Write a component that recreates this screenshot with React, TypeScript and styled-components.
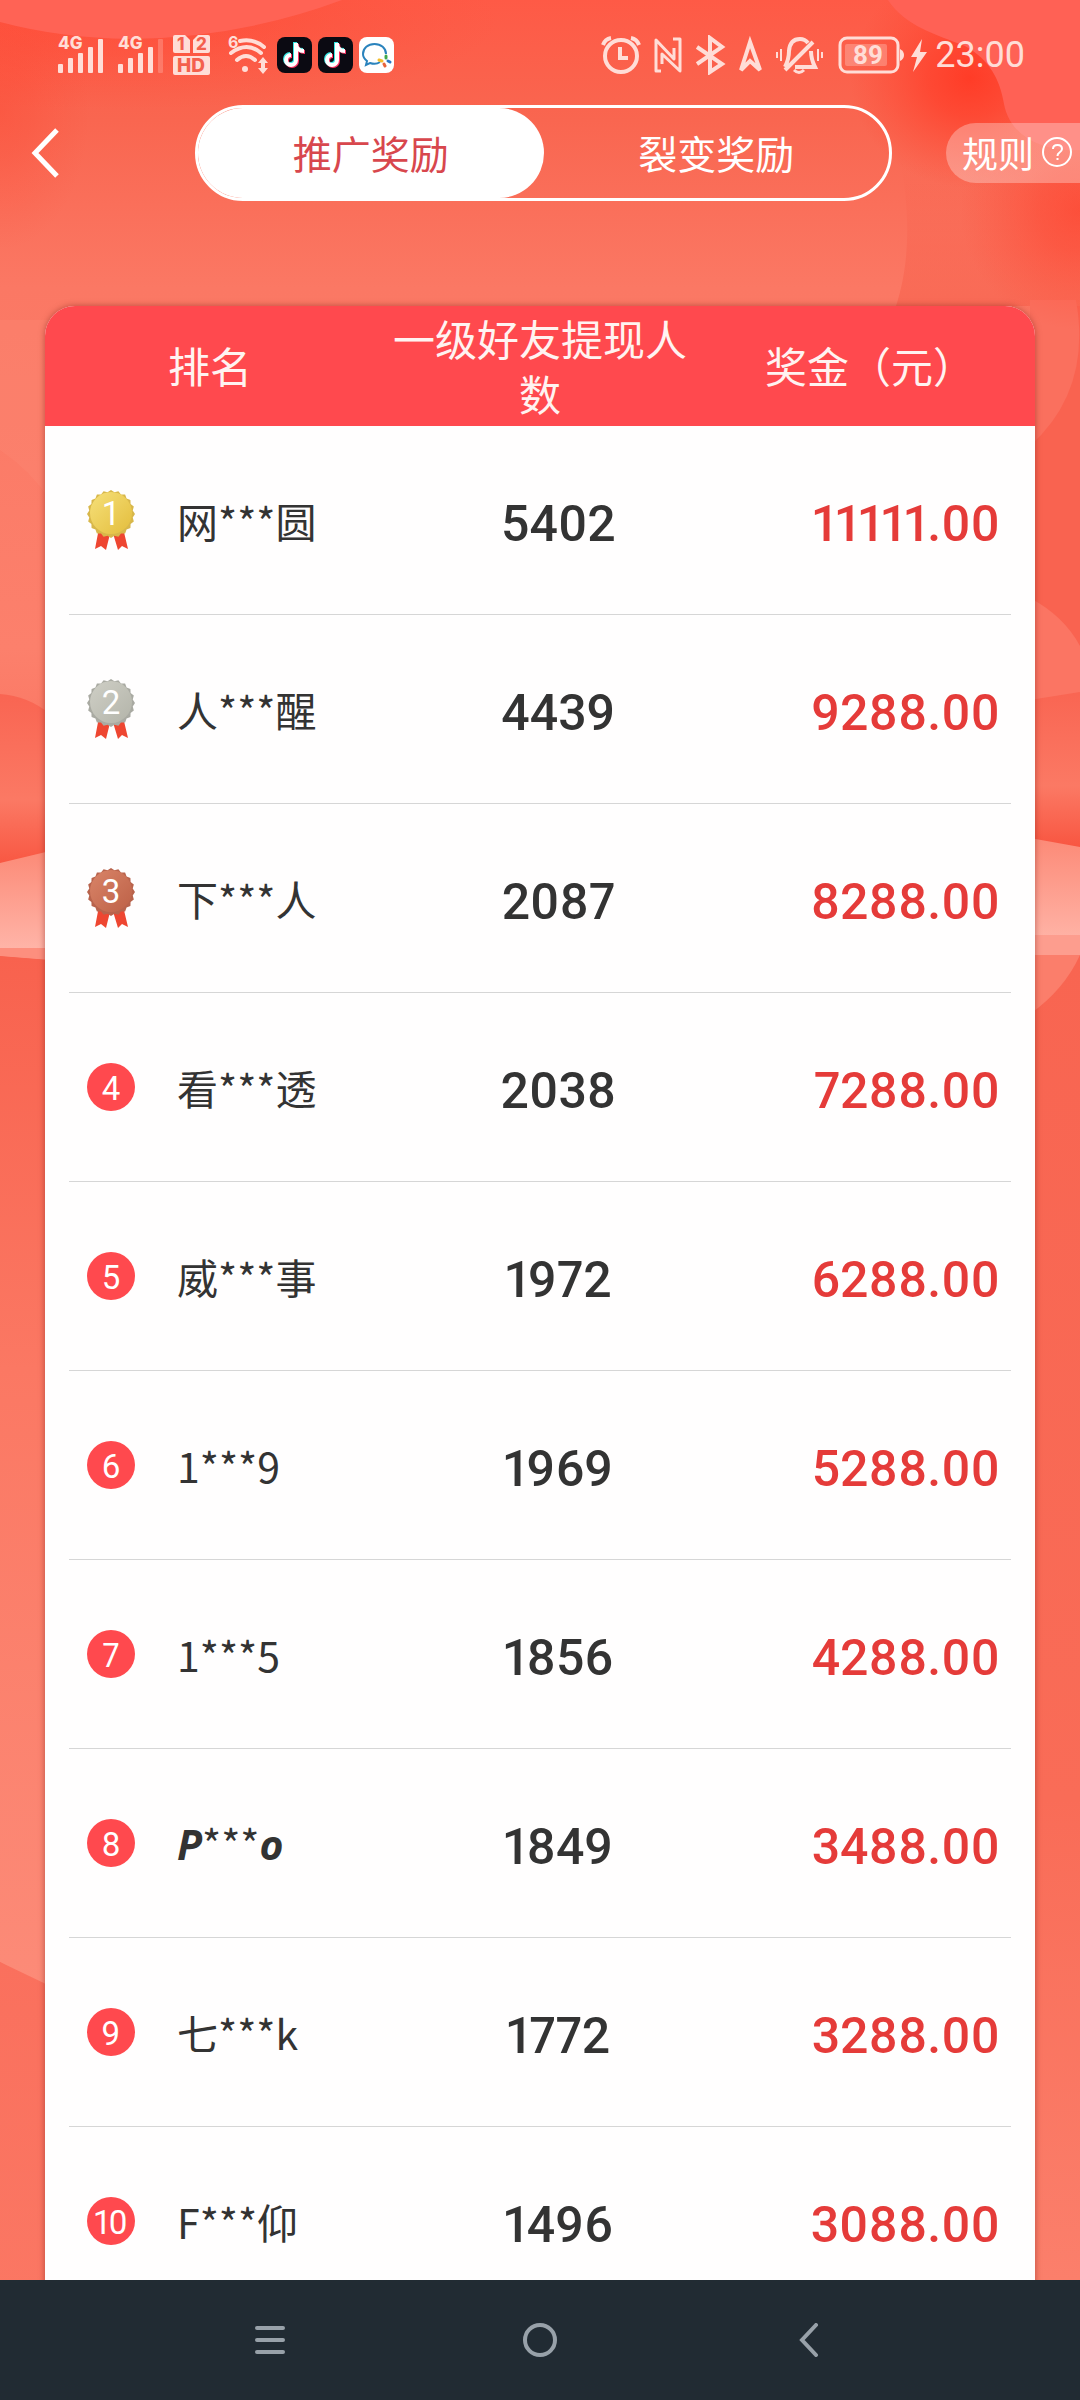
import React, { useState } from 'react';
import styled, { createGlobalStyle, css } from 'styled-components';

const cjk = '"Noto Sans CJK SC", "Noto Sans", sans-serif';
const latin = 'Roboto, "Noto Sans", "Noto Sans CJK SC", sans-serif';

const GlobalStyle = createGlobalStyle`
  *, *::before, *::after { box-sizing: border-box; }
  body { margin: 0; font-family: ${cjk}; color: #333; }
  button { margin: 0; padding: 0; border: 0; background: none; font: inherit; color: inherit; cursor: pointer; }
`;

/* ---------- page ---------- */

const Screen = styled.div`
  position: relative;
  isolation: isolate;
  display: flex;
  flex-direction: column;
  height: 100vh;
  overflow: hidden;
`;

const Backdrop = styled.svg`
  position: absolute;
  inset: 0;
  z-index: -1;
  width: 100%;
  height: 100%;
`;

/* ---------- status bar ---------- */

const StatusBar = styled.header`
  display: flex;
  align-items: center;
  justify-content: space-between;
  height: 105px;
  padding: 4px 55px 0 57px;
  color: #ffddd7;
`;

const StatusGroup = styled.div<{ $gap: number }>`
  display: flex;
  align-items: center;
  gap: ${(p) => p.$gap}px;

  svg { display: block; }
`;

const Clock = styled.time`
  margin-left: -4px;
  font-family: Roboto, sans-serif;
  font-size: 36px;
  line-height: 40px;
`;

/* ---------- toolbar ---------- */

const Toolbar = styled.nav`
  display: flex;
  align-items: center;
  height: 96px;
  color: #fff;
`;

const ToolbarSide = styled.div<{ $end?: boolean }>`
  flex: 0 0 ${(p) => (p.$end ? 188 : 195)}px;
  display: flex;
  justify-content: ${(p) => (p.$end ? 'flex-end' : 'flex-start')};
`;

const BackButton = styled.button`
  display: flex;
  padding: 0 30px;
`;

const Tabs = styled.div`
  flex: 1;
  display: flex;
  height: 96px;
  border: 3px solid #fff;
  border-radius: 48px;
`;

const Tab = styled.button<{ $active: boolean }>`
  flex: 1;
  padding-bottom: 3px;
  border-radius: 48px;
  font-size: 39px;
  line-height: 54px;
  ${(p) => p.$active && css`
    background: #fff;
    color: #d8474d;
  `}
`;

const RulesButton = styled.button`
  display: flex;
  align-items: center;
  gap: 8px;
  height: 60px;
  padding: 0 7px 2px 16px;
  border-radius: 30px 0 0 30px;
  background: rgba(255, 255, 255, 0.3);
  font-size: 36px;
  line-height: 54px;
`;

/* ---------- ranking ---------- */

const Content = styled.main`
  flex: 1;
  min-height: 0;
  overflow: hidden;
  padding: 105px 45px 0;
`;

const Ranking = styled.table`
  display: block;
  overflow: hidden;
  border-radius: 30px 30px 0 0;
  background: #fffefe;
  box-shadow: 0 0 6px rgba(120, 30, 20, 0.5);
`;

const RankingHead = styled.thead`
  display: block;
  background: #ff494e;
  color: #fff3f1;
`;

const HeadRow = styled.tr`
  display: grid;
  grid-template-columns: repeat(3, 1fr);
  align-items: center;
  height: 120px;
  padding-bottom: 3px;
`;

const HeadCell = styled.th`
  padding: 0;
  font-size: 42px;
  font-weight: 400;
  line-height: 55px;
  text-align: center;
`;

const RankingBody = styled.tbody`
  display: block;
  padding: 0 24px;
`;

const Row = styled.tr`
  display: grid;
  grid-template-columns: 90px 14fr 10fr 17fr;
  align-items: center;
  height: 189px;
  padding: 0 11px 0 18px;
  border-bottom: 1px solid #d6d6d6;
`;

const Cell = styled.td`
  display: flex;
  padding: 0;
`;

const NameCell = styled(Cell)`
  display: block;
  font-size: 41px;
  line-height: 60px;
  white-space: nowrap;
`;

const Slanted = styled.em`
  font-family: "Noto Sans", sans-serif;
  font-weight: 700;
  font-style: italic;
`;

const figures = css`
  display: block;
  padding-top: 8px;
  font-family: ${latin};
  font-feature-settings: 'pnum' 1;
  font-size: 50px;
  font-weight: 500;
  line-height: 60px;
`;

const CountCell = styled(Cell)`
  ${figures}
  text-align: center;
`;

const PrizeCell = styled(Cell)`
  ${figures}
  color: #e53b39;
  text-align: right;
`;

const RankDot = styled.span`
  display: grid;
  place-items: center;
  width: 48px;
  height: 48px;
  padding-top: 3px;
  border-radius: 50%;
  background: #ff494e;
  color: #fff;
  font-family: ${latin};
  font-size: 33px;
  line-height: 45px;
  font-feature-settings: 'pnum' 1;
`;

/* ---------- system navigation ---------- */

const SystemNav = styled.footer`
  flex: 0 0 120px;
  display: flex;
  justify-content: center;
  background: #212b33;
  color: #98a1a9;
`;

const SystemButton = styled.button`
  flex: 0 0 25%;
  display: grid;
  place-items: center;
`;

/* ---------- drawings ---------- */

function Background() {
  return (
    <Backdrop viewBox="0 0 1080 2400" preserveAspectRatio="none" aria-hidden="true">
      <defs>
        <linearGradient id="base" x1="0" y1="0" x2="0" y2="1">
          <stop offset="0" stopColor="#fe5a46" />
          <stop offset=".05" stopColor="#f96650" />
          <stop offset=".12" stopColor="#fb7864" />
          <stop offset=".27" stopColor="#fc806c" />
          <stop offset=".4" stopColor="#f86551" />
          <stop offset=".75" stopColor="#f96c57" />
          <stop offset=".95" stopColor="#fb7f6b" />
        </linearGradient>
        <linearGradient id="light" x1="0" y1="0" x2="0" y2="1">
          <stop offset="0" stopColor="#fc8a77" />
          <stop offset="1" stopColor="#ffb9ad" />
        </linearGradient>
        <linearGradient id="fold" x1="0" y1="0" x2="0" y2="1">
          <stop offset="0" stopColor="#f96552" />
          <stop offset=".6" stopColor="#fb7964" />
          <stop offset="1" stopColor="#f8543f" />
        </linearGradient>
        <linearGradient id="leftLow" x1="0" y1="0" x2="0" y2="1">
          <stop offset="0" stopColor="#f8624e" />
          <stop offset=".4" stopColor="#fb7863" />
          <stop offset="1" stopColor="#fc8b78" />
        </linearGradient>
        <linearGradient id="leftEnd" x1="0" y1="0" x2="0" y2="1">
          <stop offset="0" stopColor="#fa705d" />
          <stop offset="1" stopColor="#fb7965" />
        </linearGradient>
        <linearGradient id="shade" x1="0" y1="0" x2="0" y2="1">
          <stop offset="0" stopColor="#f8644f" stopOpacity="0" />
          <stop offset=".6" stopColor="#f8644f" stopOpacity=".5" />
          <stop offset="1" stopColor="#f8644f" stopOpacity=".7" />
        </linearGradient>
        <radialGradient id="glow">
          <stop offset="0" stopColor="#ff3c27" />
          <stop offset=".35" stopColor="#ff402b" stopOpacity=".75" />
          <stop offset="1" stopColor="#ff4a34" stopOpacity="0" />
        </radialGradient>
      </defs>
      <rect width="1080" height="2400" fill="url(#base)" />
      <ellipse cx="120" cy="20" rx="380" ry="90" fill="url(#glow)" opacity=".4" />
      <ellipse cx="0" cy="110" rx="90" ry="140" fill="url(#glow)" opacity=".3" />
      <path d="M0 0H342Q240 38 130 39Q60 38 0 22Z" fill="#ff6355" />
      <path d="M896 306C908 270 912 220 900 160L1080 160V306Z" fill="url(#shade)" />
      <path d="M1030 306H1080V700H1030Z" fill="#f96350" />
      <path d="M1030 300H1076Q1092 390 1030 446Z" fill="#fa705e" />
      <ellipse cx="1080" cy="210" rx="120" ry="120" fill="url(#glow)" opacity=".6" />
      <ellipse cx="970" cy="78" rx="120" ry="110" fill="url(#glow)" />
      <path d="M888 0C905 26 935 34 965 46C990 60 1000 80 1004 104C1010 135 1040 152 1080 150V0Z" fill="#ff6155" />
      <rect x="1030" y="690" width="50" height="160" fill="url(#fold)" />
      <path d="M1030 598Q1064 616 1080 646V692L1030 700Z" fill="#fb7563" />
      <path d="M0 694Q28 696 50 714V870H0Z" fill="url(#fold)" />
      <path d="M0 450Q30 470 50 500V320H0Z" fill="#fd8772" opacity=".4" />
      <path d="M0 863L50 851V960L0 956Z" fill="url(#light)" />
      <path d="M0 948H50V960L0 956Z" fill="#fd8f7e" />
      <path d="M1030 838L1080 847V955H1030Z" fill="url(#light)" />
      <path d="M1030 935H1080V955H1030Z" fill="#fd9d8e" />
      <path d="M0 956L50 960V1990L0 1962Z" fill="url(#leftLow)" />
      <path d="M0 1962L50 1986V2400H0Z" fill="url(#leftEnd)" />
      <path d="M1030 955H1080Q1064 990 1030 1014Z" fill="#fb7e6b" />
    </Backdrop>
  );
}

function Signal({ width, bars }: { width: number; bars: number }) {
  return (
    <svg width={width} height="48" viewBox={`0 -4 ${width} 48`} fill="currentColor" role="img" aria-label="4G">
      <text x="1" y="14" fontFamily="Inter, sans-serif" fontWeight="800" fontSize="17">4G</text>
      {[9, 15, 20, 26, 34].map((h, i) => (
        <rect key={h} x={1 + i * 10} y={38 - h} width="5" height={h} rx="1" opacity={i < bars ? 1 : 0.25} />
      ))}
    </svg>
  );
}

function DualSim() {
  return (
    <svg width="48" height="42" viewBox="0 0 48 42" role="img" aria-label="HD">
      <g fill="currentColor">
        <path d="M2 1h10l5 5v13H2q-2 0-2-2V3q0-2 2-2Z" />
        <path d="M25 1h10q2 0 2 2v14q0 2-2 2H20V6Z" />
        <rect y="22" width="37" height="19" rx="2" />
      </g>
      <g fill="#f4604d" fontFamily="Inter, sans-serif" fontWeight="800" fontSize="17">
        <text x="4" y="16">1</text>
        <text x="23" y="16">2</text>
      </g>
      <text x="4" y="38" fill="#f4604d" fontFamily="Inter, sans-serif" fontWeight="800" fontSize="19">HD</text>
    </svg>
  );
}

function Wifi() {
  return (
    <svg width="44" height="48" viewBox="0 -4 44 48" fill="none" stroke="currentColor" strokeWidth="4" role="img" aria-label="Wi-Fi 6">
      <text x="1" y="13" fill="currentColor" stroke="none" fontFamily="Inter, sans-serif" fontWeight="700" fontSize="16">6</text>
      <path d="M13 6Q26 3 37 12M4 18Q20 6 34 18M10 25Q19 17 28 25" strokeLinecap="round" />
      <circle cx="18" cy="34" r="3" fill="currentColor" stroke="none" />
      <path d="M36 22l5 6h-3v5h3l-5 6-5-6h3v-5h-3Z" fill="currentColor" stroke="none" />
    </svg>
  );
}

function NoteApp() {
  const note = 'M19 6v17a5 5 0 1 1-5-5M19 6c0 6 4 8 8 8';
  return (
    <svg width="35" height="36" viewBox="0 0 35 36" fill="none" strokeWidth="4" role="img" aria-label="TikTok">
      <rect width="35" height="36" rx="8" fill="#0b0a12" />
      <path d={note} stroke="#35e6e3" transform="translate(-1 -1)" />
      <path d={note} stroke="#fa3564" transform="translate(1 1)" />
      <path d={note} stroke="#fff" />
    </svg>
  );
}

function ChatApp() {
  return (
    <svg width="35" height="36" viewBox="0 0 35 36" fill="none" strokeWidth="2" role="img" aria-label="WeCom">
      <rect width="35" height="36" rx="8" fill="#fff" />
      <path d="M27 17C27 11 22 7 15.500 7S4 11 4 17q0 4 4 7l-1 4 4-2q6 2 10-1" stroke="#2a83bd" />
      <g strokeWidth="3" strokeLinecap="round">
        <path d="M27 19v2" stroke="#3fa84c" />
        <path d="M29 24l2 1" stroke="#2a76c4" />
        <path d="M25 27l1 2" stroke="#e8633a" />
        <path d="M20 23l3 1" stroke="#f3bd2c" />
      </g>
    </svg>
  );
}

function Alarm() {
  return (
    <svg width="40" height="40" viewBox="0 0 40 40" fill="none" stroke="currentColor" strokeWidth="4" role="img" aria-label="Alarm">
      <circle cx="20" cy="21" r="16" />
      <path d="M19 12v11h8" />
      <path d="M2 10Q4 4 10 3M38 10Q36 4 30 3" />
    </svg>
  );
}

function Nfc() {
  return (
    <svg width="30" height="40" viewBox="0 0 30 40" fill="none" stroke="currentColor" strokeWidth="3" strokeLinejoin="round" role="img" aria-label="NFC">
      <path d="M8 36H3V5L21 24V13M20 4h7V36L9 19V29" />
    </svg>
  );
}

function Bluetooth() {
  return (
    <svg width="31" height="40" viewBox="0 0 31 40" fill="none" stroke="currentColor" strokeWidth="4" role="img" aria-label="Bluetooth">
      <path d="M2 12L27 29 15 37V3L27 12 2 29" />
    </svg>
  );
}

function Pointer() {
  return (
    <svg width="25" height="40" viewBox="0 0 25 40" fill="none" stroke="currentColor" strokeWidth="4" role="img" aria-label="Location">
      <path d="M12 7L3 35 12 26 22 35Z" />
    </svg>
  );
}

function Muted() {
  return (
    <svg width="49" height="40" viewBox="0 0 49 40" fill="none" stroke="currentColor" strokeWidth="4" role="img" aria-label="Vibrate">
      <path d="M10 35L38 7M10 32Q14 24 14 16Q15 4 25 4Q30 4 33 8M36 16Q36 24 40 32H20" />
      <path d="M19 35Q24 40 29 35" strokeWidth="3" />
      <path d="M6 14v12M2 17v6M43 14v12M47 17v6" strokeWidth="2" />
    </svg>
  );
}

function Battery() {
  return (
    <svg width="91" height="40" viewBox="0 0 91 40" role="img" aria-label="89%">
      <rect x="4" y="3" width="58" height="34" rx="7" fill="none" stroke="currentColor" strokeWidth="3" />
      <rect x="9" y="9" width="42" height="22" rx="2" fill="currentColor" opacity=".3" />
      <path d="M64 14q4 2 4 6t-4 6Z" fill="currentColor" />
      <text x="32" y="29" textAnchor="middle" fill="currentColor" fontFamily="Roboto, sans-serif" fontWeight="700" fontSize="26">89</text>
      <path d="M86 4L75 22h6l-4 15 14-20h-7Z" fill="currentColor" />
    </svg>
  );
}

const medalTones: Record<number, [string, string, string]> = {
  1: ['#e3bd3c', '#f6e07a', '#d8b74a'],
  2: ['#b3b4a9', '#cfcfc6', '#a9aaa2'],
  3: ['#bd6147', '#d98468', '#b8634c'],
};

const scallops = Array.from({ length: 40 }, (_, i) => {
  const angle = (i * Math.PI) / 20;
  const radius = i % 2 ? 22 : 24;
  return `${24 + radius * Math.sin(angle)},${24 - radius * Math.cos(angle)}`;
}).join(' ');

function Medal({ rank }: { rank: number }) {
  const [dark, bright, rim] = medalTones[rank];
  return (
    <svg width="48" height="60" viewBox="0 0 48 60">
      <defs>
        <linearGradient id={`medal${rank}`} x1="0" y1="0" x2="1" y2="1">
          <stop offset="0" stopColor={bright} />
          <stop offset="1" stopColor={dark} />
        </linearGradient>
      </defs>
      <path d="M12 38L8 59l6-3 5 4 5-20Z" fill="#ee4631" />
      <path d="M36 38l5 21-6-3-4 4-6-20Z" fill="#ee4631" />
      <polygon points={scallops} fill={rim} />
      <circle cx="24" cy="23" r="21" fill={`url(#medal${rank})`} />
      <text x="24" y="35" textAnchor="middle" fill="#fff" fontFamily="Roboto, sans-serif" fontSize="33">{rank}</text>
    </svg>
  );
}

/* ---------- data ---------- */

interface Entry {
  rank: number;
  name: React.ReactNode;
  count: number;
  prize: string;
}

const entries: Entry[] = [
  { rank: 1, name: '网***圆', count: 5402, prize: '11111.00' },
  { rank: 2, name: '人***醒', count: 4439, prize: '9288.00' },
  { rank: 3, name: '下***人', count: 2087, prize: '8288.00' },
  { rank: 4, name: '看***透', count: 2038, prize: '7288.00' },
  { rank: 5, name: '威***事', count: 1972, prize: '6288.00' },
  { rank: 6, name: '1***9', count: 1969, prize: '5288.00' },
  { rank: 7, name: '1***5', count: 1856, prize: '4288.00' },
  { rank: 8, name: <><Slanted>P</Slanted>***<Slanted>o</Slanted></>, count: 1849, prize: '3488.00' },
  { rank: 9, name: '七***k', count: 1772, prize: '3288.00' },
  { rank: 10, name: 'F***仰', count: 1496, prize: '3088.00' },
];

const tabs = ['推广奖励', '裂变奖励'];

export default function App() {
  const [active, setActive] = useState(0);

  return (
    <Screen lang="zh-CN">
      <GlobalStyle />
      <Background />

      <StatusBar>
        <StatusGroup $gap={6}>
          <Signal width={54} bars={5} />
          <Signal width={50} bars={4} />
          <DualSim />
          <Wifi />
          <NoteApp />
          <NoteApp />
          <ChatApp />
        </StatusGroup>
        <StatusGroup $gap={12}>
          <Alarm />
          <Nfc />
          <Bluetooth />
          <Pointer />
          <Muted />
          <Battery />
          <Clock>23:00</Clock>
        </StatusGroup>
      </StatusBar>

      <Toolbar>
        <ToolbarSide>
          <BackButton aria-label="返回">
            <svg width="30" height="50" viewBox="0 0 30 50" fill="none" stroke="currentColor" strokeWidth="5">
              <path d="M27 2L5 25 27 48" />
            </svg>
          </BackButton>
        </ToolbarSide>
        <Tabs role="tablist">
          {tabs.map((label, i) => (
            <Tab key={label} role="tab" aria-selected={active === i} $active={active === i} onClick={() => setActive(i)}>
              {label}
            </Tab>
          ))}
        </Tabs>
        <ToolbarSide $end>
          <RulesButton>
            规则
            <svg width="31" height="31" viewBox="0 0 31 31" fill="none" stroke="currentColor" strokeWidth="2" aria-hidden="true">
              <circle cx="15" cy="15" r="14" />
              <path d="M11 12q0-4 4.500-4t4.500 4q0 2-3 4-1.500 1-1.500 3M15.500 21v2" />
            </svg>
          </RulesButton>
        </ToolbarSide>
      </Toolbar>

      <Content>
        <Ranking>
          <RankingHead>
            <HeadRow>
              <HeadCell>排名</HeadCell>
              <HeadCell>一级好友提现人数</HeadCell>
              <HeadCell>奖金（元）</HeadCell>
            </HeadRow>
          </RankingHead>
          <RankingBody>
            {entries.map((entry) => (
              <Row key={entry.rank}>
                <Cell>{entry.rank <= 3 ? <Medal rank={entry.rank} /> : <RankDot>{entry.rank}</RankDot>}</Cell>
                <NameCell>{entry.name}</NameCell>
                <CountCell>{entry.count}</CountCell>
                <PrizeCell>{entry.prize}</PrizeCell>
              </Row>
            ))}
          </RankingBody>
        </Ranking>
      </Content>

      <SystemNav>
        <SystemButton aria-label="菜单">
          <svg width="34" height="34" viewBox="0 0 34 34" stroke="currentColor" strokeWidth="4" strokeLinecap="round">
            <path d="M4 5H30M4 17H30M4 29H30" />
          </svg>
        </SystemButton>
        <SystemButton aria-label="主页">
          <svg width="36" height="36" viewBox="0 0 36 36" fill="none" stroke="currentColor" strokeWidth="4">
            <circle cx="18" cy="18" r="15" />
          </svg>
        </SystemButton>
        <SystemButton aria-label="返回">
          <svg width="34" height="34" viewBox="0 0 34 34" fill="none" stroke="currentColor" strokeWidth="4" strokeLinecap="round">
            <path d="M23 2L9 17 23 32" />
          </svg>
        </SystemButton>
      </SystemNav>
    </Screen>
  );
}
